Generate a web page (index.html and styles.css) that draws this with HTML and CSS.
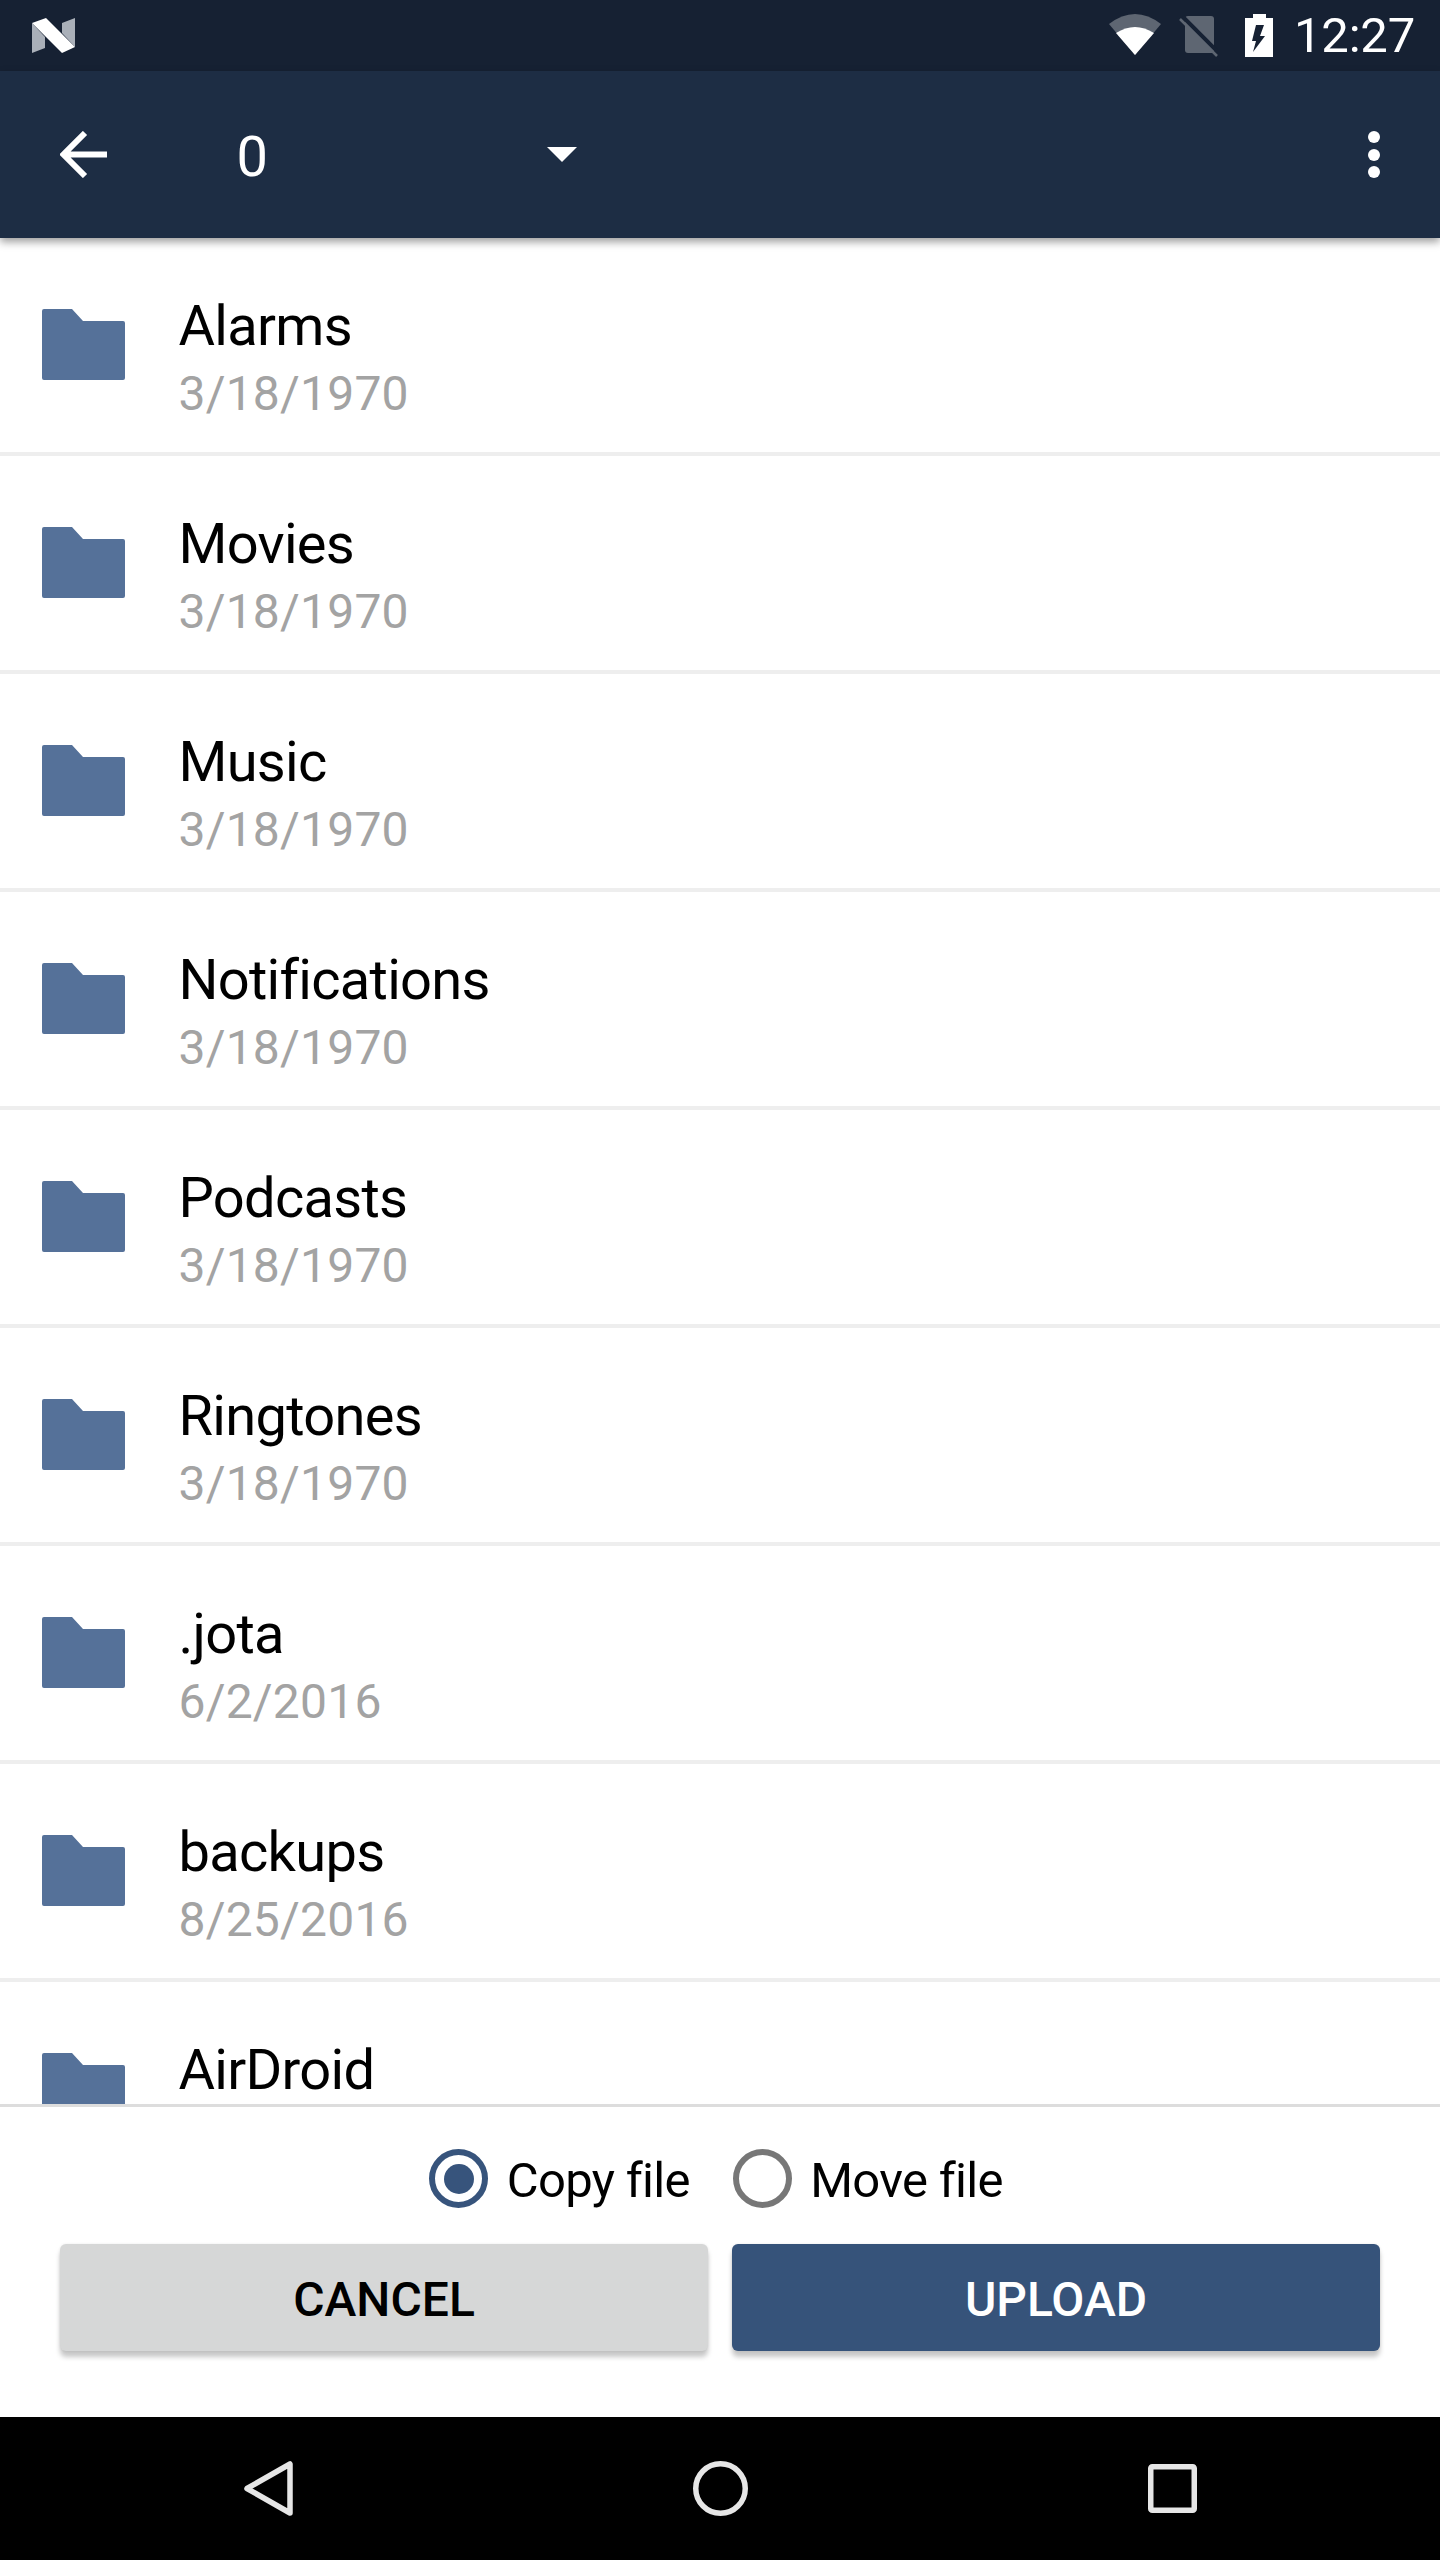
FILE: index.html
```html
<!DOCTYPE html>
<html lang="en">
<head>
<meta charset="utf-8">
<title>Upload file</title>
<link rel="stylesheet" href="styles.css">
</head>
<body>
<div class="screen">
  <header class="status">
    <svg class="n-logo" width="43" height="43" viewBox="0 0 43 43">
      <path fill="#aab0b9" d="M0 9 13 23V34L0 39ZM30 9 43 4V33L30 19Z"/>
      <path fill="#fff" d="M0 9 14 4 43 33 30 39Z"/>
    </svg>
    <svg class="wifi" width="52" height="43" viewBox="0 0 52 43">
      <path fill="#5e6672" d="M0 10Q26-10 52 10L26 41Z"/>
      <path fill="#fff" d="M7 19Q26 7 45 19L26 41Z"/>
    </svg>
    <svg class="sim" width="39" height="43" viewBox="0 0 39 43">
      <path fill="#5e6672" d="M9 2H32a3 3 0 0 1 3 3V39H9a3 3 0 0 1-3-3V5a3 3 0 0 1 3-3Z"/>
      <path stroke="#162133" stroke-width="4" d="M3.500 2.500 39 38"/>
      <path stroke="#5e6672" stroke-width="2.500" d="M1 5 38 42"/>
    </svg>
    <svg class="battery" width="28" height="43" viewBox="0 0 28 43">
      <path fill="#fff" fill-rule="evenodd" d="M8 0H21V4H28V43H0V4H8ZM11 11 7 27H11L8 38 20 22H15L19 11Z"/>
    </svg>
    <span class="clock">12:27</span>
  </header>

  <nav class="toolbar">
    <svg class="back" width="47" height="47" viewBox="0 0 47 47">
      <path fill="none" stroke="#fff" stroke-width="6" d="M47 23.500H4M25 2 3.500 23.500 25 45"/>
    </svg>
    <span class="crumb">0</span>
    <span class="caret"></span>
    <span class="dots"><i></i><i></i><i></i></span>
  </nav>

  <main class="list">
    <div class="row">
      <svg class="folder" width="83" height="71" viewBox="0 0 83 71"><path d="M2 0H30L41 12H81a2 2 0 0 1 2 2V69a2 2 0 0 1-2 2H2a2 2 0 0 1-2-2V2a2 2 0 0 1 2-2Z"/></svg>
      <div class="meta"><div class="name">Alarms</div><div class="date">3/18/1970</div></div>
    </div>
    <div class="row">
      <svg class="folder" width="83" height="71" viewBox="0 0 83 71"><path d="M2 0H30L41 12H81a2 2 0 0 1 2 2V69a2 2 0 0 1-2 2H2a2 2 0 0 1-2-2V2a2 2 0 0 1 2-2Z"/></svg>
      <div class="meta"><div class="name">Movies</div><div class="date">3/18/1970</div></div>
    </div>
    <div class="row">
      <svg class="folder" width="83" height="71" viewBox="0 0 83 71"><path d="M2 0H30L41 12H81a2 2 0 0 1 2 2V69a2 2 0 0 1-2 2H2a2 2 0 0 1-2-2V2a2 2 0 0 1 2-2Z"/></svg>
      <div class="meta"><div class="name">Music</div><div class="date">3/18/1970</div></div>
    </div>
    <div class="row">
      <svg class="folder" width="83" height="71" viewBox="0 0 83 71"><path d="M2 0H30L41 12H81a2 2 0 0 1 2 2V69a2 2 0 0 1-2 2H2a2 2 0 0 1-2-2V2a2 2 0 0 1 2-2Z"/></svg>
      <div class="meta"><div class="name">Notifications</div><div class="date">3/18/1970</div></div>
    </div>
    <div class="row">
      <svg class="folder" width="83" height="71" viewBox="0 0 83 71"><path d="M2 0H30L41 12H81a2 2 0 0 1 2 2V69a2 2 0 0 1-2 2H2a2 2 0 0 1-2-2V2a2 2 0 0 1 2-2Z"/></svg>
      <div class="meta"><div class="name">Podcasts</div><div class="date">3/18/1970</div></div>
    </div>
    <div class="row">
      <svg class="folder" width="83" height="71" viewBox="0 0 83 71"><path d="M2 0H30L41 12H81a2 2 0 0 1 2 2V69a2 2 0 0 1-2 2H2a2 2 0 0 1-2-2V2a2 2 0 0 1 2-2Z"/></svg>
      <div class="meta"><div class="name">Ringtones</div><div class="date">3/18/1970</div></div>
    </div>
    <div class="row">
      <svg class="folder" width="83" height="71" viewBox="0 0 83 71"><path d="M2 0H30L41 12H81a2 2 0 0 1 2 2V69a2 2 0 0 1-2 2H2a2 2 0 0 1-2-2V2a2 2 0 0 1 2-2Z"/></svg>
      <div class="meta"><div class="name">.jota</div><div class="date">6/2/2016</div></div>
    </div>
    <div class="row">
      <svg class="folder" width="83" height="71" viewBox="0 0 83 71"><path d="M2 0H30L41 12H81a2 2 0 0 1 2 2V69a2 2 0 0 1-2 2H2a2 2 0 0 1-2-2V2a2 2 0 0 1 2-2Z"/></svg>
      <div class="meta"><div class="name">backups</div><div class="date">8/25/2016</div></div>
    </div>
    <div class="row">
      <svg class="folder" width="83" height="71" viewBox="0 0 83 71"><path d="M2 0H30L41 12H81a2 2 0 0 1 2 2V69a2 2 0 0 1-2 2H2a2 2 0 0 1-2-2V2a2 2 0 0 1 2-2Z"/></svg>
      <div class="meta"><div class="name">AirDroid</div></div>
    </div>
  </main>

  <section class="panel">
    <div class="options">
      <label class="option"><span class="radio radio-on"></span><span class="option-text">Copy file</span></label>
      <label class="option"><span class="radio"></span><span class="option-text">Move file</span></label>
    </div>
    <div class="actions">
      <div class="btn btn-cancel">CANCEL</div>
      <div class="btn btn-upload">UPLOAD</div>
    </div>
  </section>

  <footer class="navbar">
    <svg width="49" height="55" viewBox="0 0 49 55"><path fill="none" stroke="#e6e6e6" stroke-width="5.500" stroke-linejoin="round" d="M46 3V52L3 27.500Z"/></svg>
    <svg width="55" height="55" viewBox="0 0 55 55"><circle cx="27.500" cy="27.500" r="24.750" fill="none" stroke="#e6e6e6" stroke-width="5.500"/></svg>
    <svg width="49" height="49" viewBox="0 0 49 49"><rect x="2.750" y="2.750" width="43.500" height="43.500" rx="1.500" fill="none" stroke="#e6e6e6" stroke-width="5.500"/></svg>
  </footer>
</div>
</body>
</html>
```

FILE: styles.css
```css
* { box-sizing: border-box; }
html, body { margin: 0; padding: 0; background: #fff; }
.screen {
  width: 1440px;
  height: 2560px;
  display: flex;
  flex-direction: column;
  overflow: hidden;
  font-family: Roboto, "Liberation Sans", sans-serif;
}

.status {
  flex: 0 0 71px;
  display: flex;
  align-items: center;
  padding: 0 25px 0 32px;
  background: #162133;
}
.wifi { margin-left: auto; }
.sim { margin-left: 18px; }
.battery { margin-left: 27px; }
.clock {
  margin-left: 21px;
  font-size: 49px;
  letter-spacing: -0.2px;
  line-height: 71px;
  color: #fff;
}

.toolbar {
  position: relative;
  z-index: 2;
  flex: 0 0 167px;
  display: flex;
  align-items: center;
  padding: 0 60px;
  background: #1d2d44;
  box-shadow: 0 4px 8px rgba(0, 0, 0, 0.38);
}
.crumb {
  margin-left: 129.500px;
  width: 310.500px;
  font-size: 56px;
  line-height: 72px;
  color: #fff;
  padding-top: 4px;
}
.caret {
  width: 0;
  height: 0;
  border-left: 15px solid transparent;
  border-right: 15px solid transparent;
  border-top: 15px solid #fff;
}
.dots {
  margin-left: auto;
  display: flex;
  flex-direction: column;
  gap: 5.500px;
}
.dots i {
  display: block;
  width: 12px;
  height: 12px;
  border-radius: 50%;
  background: #fff;
}

.list {
  flex: 1 1 0;
  min-height: 0;
  overflow: hidden;
}
.row {
  height: 218px;
  display: flex;
  align-items: center;
  padding: 0 0 1px 42px;
  border-bottom: 4px solid #eeeeee;
}
.folder { flex: none; }
.folder path { fill: #557199; }
.meta {
  align-self: flex-start;
  margin-left: 53.500px;
  padding-top: 54px;
}
.name {
  font-size: 56px;
  letter-spacing: -0.7px;
  line-height: 68px;
  color: #000;
}
.date {
  font-size: 48px;
  letter-spacing: 0.2px;
  line-height: 68px;
  color: #a3a3a3;
}

.panel {
  flex: 0 0 313px;
  border-top: 3px solid #dddddd;
  padding: 0 60px;
  background: #fff;
}
.options {
  display: flex;
  justify-content: center;
  gap: 43px;
  padding: 42px 8px 0 0;
  height: 137px;
}
.option {
  display: flex;
  align-items: center;
  gap: 18.500px;
  height: 59px;
}
.radio {
  position: relative;
  display: block;
  width: 59px;
  height: 59px;
  border: 6px solid #777777;
  border-radius: 50%;
}
.radio-on { border-color: #37547c; }
.radio-on::after {
  content: "";
  position: absolute;
  left: 8.500px;
  top: 8.500px;
  width: 30px;
  height: 30px;
  border-radius: 50%;
  background: #37547c;
}
.option-text {
  font-size: 49px;
  letter-spacing: -0.7px;
  line-height: 59px;
  padding-top: 4px;
  color: #000;
}
.actions {
  display: flex;
  gap: 24px;
}
.btn {
  flex: 1 1 0;
  height: 107px;
  padding-top: 3px;
  display: flex;
  align-items: center;
  justify-content: center;
  border-radius: 6px;
  font-size: 48px;
  font-weight: 500;
  box-shadow: 0 6px 5px rgba(0, 0, 0, 0.22), 0 0 3px rgba(0, 0, 0, 0.08);
}
.btn-cancel { background: #d6d7d7; color: #000; }
.btn-upload { background: #36537a; color: #fff; }

.navbar {
  flex: 0 0 143px;
  display: flex;
  align-items: center;
  justify-content: center;
  gap: 400px;
  background: #000;
}
```
